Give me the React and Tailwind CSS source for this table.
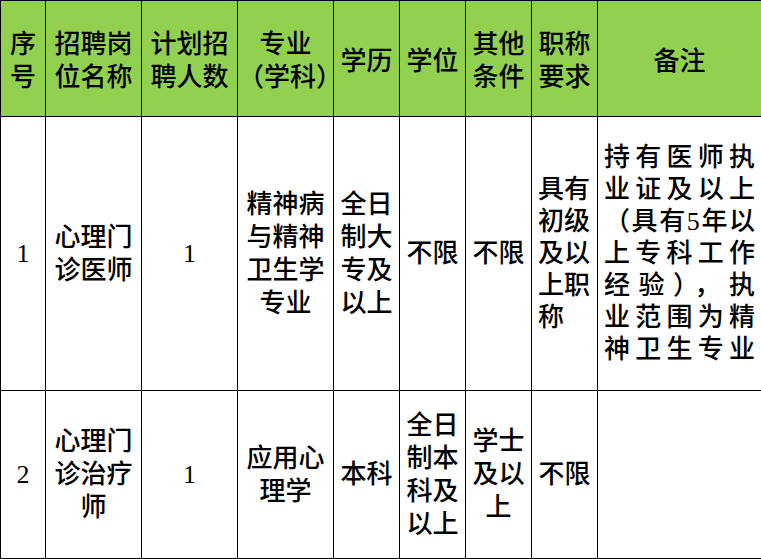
import React from 'react';

const font = { fontFamily: '"Liberation Serif", "Noto Sans CJK SC", serif' };

const Lines = ({ lines }) => (
  <>
    {lines.map((l, i) => (
      <div key={i}>{l}</div>
    ))}
  </>
);

export default function App() {
  const th = 'border border-black bg-[#92d050] p-0 pt-[5px] text-center align-middle font-medium';
  const td = 'border border-black p-0 text-center align-middle';

  return (
    <div className="w-[761px] h-[559px] bg-white overflow-hidden" style={font}>
      <table className="table-fixed border-collapse w-[761px] text-[26px] leading-[33px] text-black">
        <colgroup>
          <col className="w-[45px]" />
          <col className="w-[96px]" />
          <col className="w-[96px]" />
          <col className="w-[96px]" />
          <col className="w-[66px]" />
          <col className="w-[66px]" />
          <col className="w-[66px]" />
          <col className="w-[66px]" />
          <col className="w-[164px]" />
        </colgroup>
        <thead>
          <tr className="h-[116px]">
            <th className={th}><Lines lines={['序', '号']} /></th>
            <th className={th}><Lines lines={['招聘岗', '位名称']} /></th>
            <th className={th}><Lines lines={['计划招', '聘人数']} /></th>
            <th className={th}><Lines lines={['专业', '（学科）']} /></th>
            <th className={th}>学历</th>
            <th className={th}>学位</th>
            <th className={th}><Lines lines={['其他', '条件']} /></th>
            <th className={th}><Lines lines={['职称', '要求']} /></th>
            <th className={th}>备注</th>
          </tr>
        </thead>
        <tbody className="font-medium">
          <tr className="h-[274px]">
            <td className={td}>1</td>
            <td className={td}><Lines lines={['心理门', '诊医师']} /></td>
            <td className={td}>1</td>
            <td className={td}><Lines lines={['精神病', '与精神', '卫生学', '专业']} /></td>
            <td className={td}><Lines lines={['全日', '制大', '专及', '以上']} /></td>
            <td className={td}>不限</td>
            <td className={td}>不限</td>
            <td className={`${td} !text-left pl-[6px] leading-[32px]`}>
              <Lines lines={['具有', '初级', '及以', '上职', '称']} />
            </td>
            <td className={`${td} px-[6px] leading-[32px]`}>
              {['持有医师执', '业证及以上', '（具有5年以', '上专科工作', '经验），执', '业范围为精', '神卫生专业'].map((l, i) => (
                <div key={i} className="[text-align-last:justify] text-justify">{l}</div>
              ))}
            </td>
          </tr>
          <tr className="h-[168px]">
            <td className={td}>2</td>
            <td className={td}><Lines lines={['心理门', '诊治疗', '师']} /></td>
            <td className={td}>1</td>
            <td className={td}><Lines lines={['应用心', '理学']} /></td>
            <td className={td}>本科</td>
            <td className={td}><Lines lines={['全日', '制本', '科及', '以上']} /></td>
            <td className={td}><Lines lines={['学士', '及以', '上']} /></td>
            <td className={td}>不限</td>
            <td className={td}></td>
          </tr>
        </tbody>
      </table>
    </div>
  );
}
